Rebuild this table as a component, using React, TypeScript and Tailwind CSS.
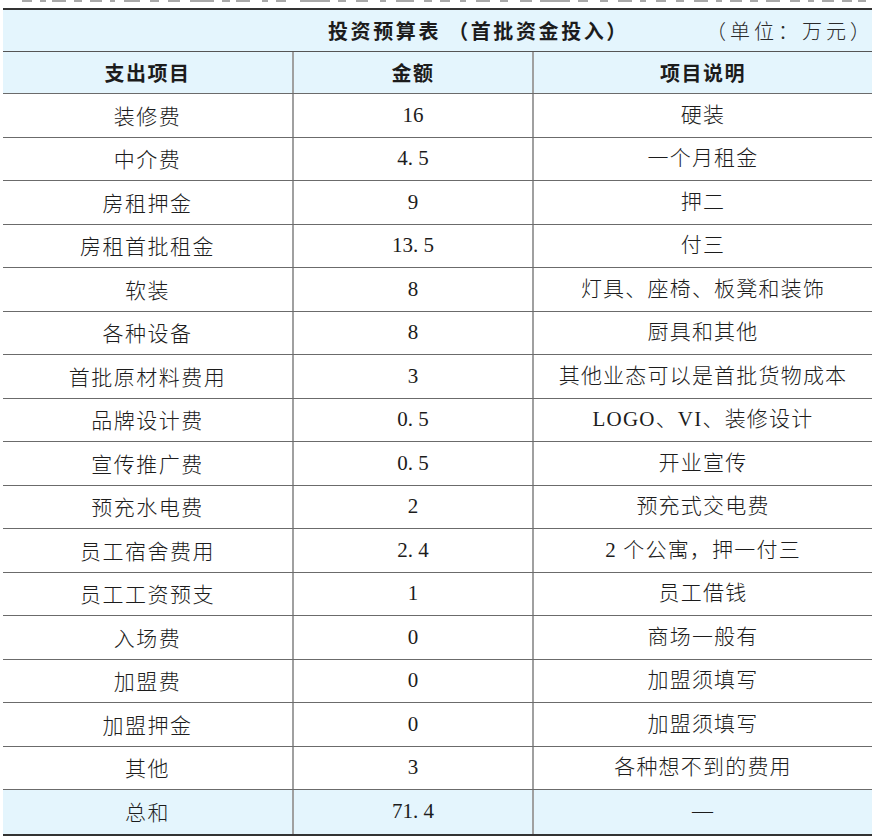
const rows: [string, string, string][] = [
  ["装修费", "16", "硬装"],
  ["中介费", "4. 5", "一个月租金"],
  ["房租押金", "9", "押二"],
  ["房租首批租金", "13. 5", "付三"],
  ["软装", "8", "灯具、座椅、板凳和装饰"],
  ["各种设备", "8", "厨具和其他"],
  ["首批原材料费用", "3", "其他业态可以是首批货物成本"],
  ["品牌设计费", "0. 5", "LOGO、VI、装修设计"],
  ["宣传推广费", "0. 5", "开业宣传"],
  ["预充水电费", "2", "预充式交电费"],
  ["员工宿舍费用", "2. 4", "2 个公寓，押一付三"],
  ["员工工资预支", "1", "员工借钱"],
  ["入场费", "0", "商场一般有"],
  ["加盟费", "0", "加盟须填写"],
  ["加盟押金", "0", "加盟须填写"],
  ["其他", "3", "各种想不到的费用"],
];

const serif = "font-['Liberation_Serif','Noto_Sans_CJK_SC',serif]";
const sans = "font-['Noto_Sans_CJK_SC','Liberation_Sans',sans-serif]";

// fragments of the previous line's glyphs, cut off by the crop
const strokes = [
  [22, 10], [40, 6], [52, 14], [74, 8], [90, 12], [110, 5], [124, 16], [150, 9], [168, 12], [190, 24],
  [222, 8], [236, 14], [262, 6], [276, 10], [300, 30], [338, 8], [356, 12], [380, 6], [396, 18], [424, 8],
  [440, 10], [460, 6], [476, 14], [500, 8], [520, 12], [540, 30], [578, 10], [600, 8], [618, 14], [640, 6],
  [656, 10], [676, 8], [694, 14], [716, 6], [730, 12], [750, 8], [766, 14], [790, 10], [808, 6], [822, 12],
  [842, 10], [858, 8],
];

function Row({ cells, shaded, last }: { cells: [string, string, string]; shaded?: boolean; last?: boolean }) {
  return (
    <div
      className={`grid h-[43.5px] grid-cols-[289px_240px_340px] ${shaded ? "bg-[#e4f5fd]" : "bg-white"} ${
        last ? "" : "border-b border-[#6b6b6b]"
      }`}
    >
      <div className={`flex items-center justify-center text-[21px] font-light tracking-[1.5px] text-[#1c1c1c] ${sans}`}>
        {cells[0]}
      </div>
      <div className={`flex items-center justify-center border-l-2 border-[#a0a0a0] text-[21px] text-[#1c1c1c] ${serif}`}>
        {cells[1]}
      </div>
      <div
        className={`flex items-center justify-center border-l-2 border-[#a0a0a0] text-[21px] font-light tracking-[1.2px] text-[#1c1c1c] ${serif}`}
      >
        {cells[2]}
      </div>
    </div>
  );
}

export default function App() {
  return (
    <div className="h-[839px] w-[875px] overflow-hidden bg-white">
      <div className="relative h-[3px]">
        {strokes.map(([x, w]) => (
          <div key={x} className="absolute top-0 h-[2px] bg-[#a8a8a8]" style={{ left: x, width: w }} />
        ))}
      </div>
      <div className="h-[5px]" />
      <div className="ml-[3px] w-[869px]">
        <div className="h-[2px] bg-[#333]" />
        <div className="flex h-[42px] items-center border-b border-[#555] bg-[#e4f5fd]">
          <div className={`ml-[325px] text-[20px] font-bold tracking-[2.6px] text-[#1c1c1c] ${sans}`}>
            投资预算表 （首批资金投入）
          </div>
          <div className={`-mr-[2px] ml-auto text-[20px] font-light tracking-[4px] text-[#2a2a2a] ${sans}`}>（单位：万元）</div>
        </div>
        <div className="grid h-[42px] grid-cols-[289px_240px_340px] border-b border-[#6b6b6b] bg-[#e4f5fd]">
          <div className={`flex items-center justify-center text-[20px] font-bold tracking-[1.5px] text-[#1c1c1c] ${sans}`}>
            支出项目
          </div>
          <div
            className={`flex items-center justify-center border-l-2 border-[#a0a0a0] text-[20px] font-bold tracking-[1.5px] text-[#1c1c1c] ${sans}`}
          >
            金额
          </div>
          <div
            className={`flex items-center justify-center border-l-2 border-[#a0a0a0] text-[20px] font-bold tracking-[1.5px] text-[#1c1c1c] ${sans}`}
          >
            项目说明
          </div>
        </div>
        {rows.map((r) => (
          <Row key={r[0]} cells={r} />
        ))}
        <Row cells={["总和", "71. 4", "—"]} shaded last />
        <div className="h-[2px] bg-[#333]" />
      </div>
    </div>
  );
}
